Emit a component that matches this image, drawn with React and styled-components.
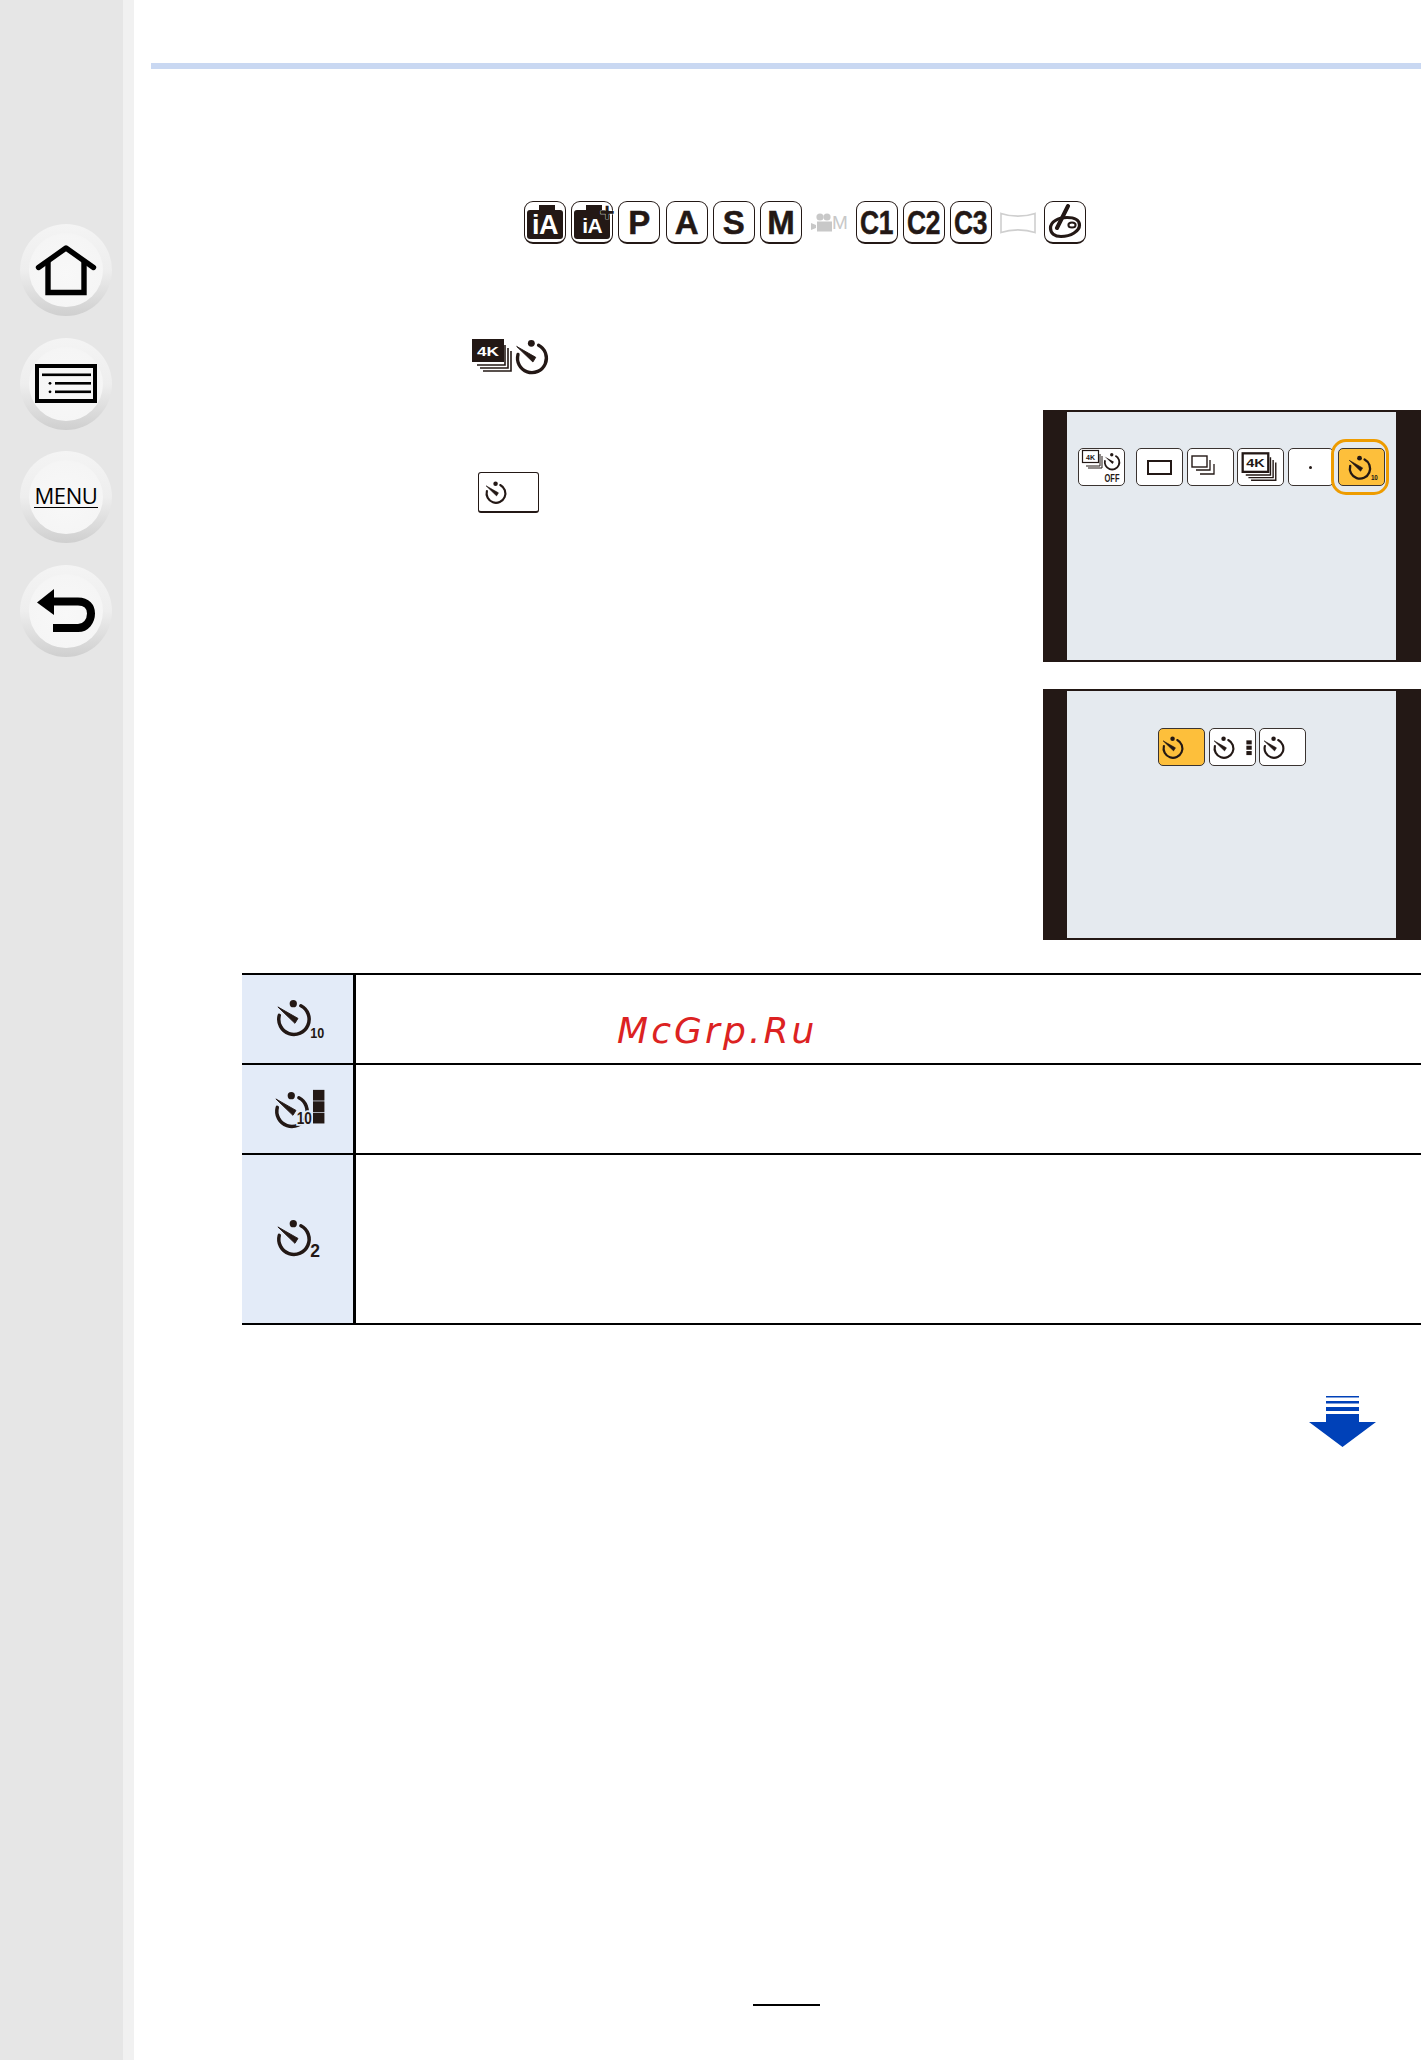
import React from "react";
import styled, { createGlobalStyle } from "styled-components";

const Global = createGlobalStyle`
  html, body { margin: 0; padding: 0; background: #fff; }
  body { font-family: "Liberation Sans", Arial, sans-serif; color: #000; }
`;

const Page = styled.div`
  display: flex;
  width: 1421px;
  min-height: 2060px;
  overflow: hidden;
`;

const Sidebar = styled.nav`
  box-sizing: border-box;
  flex: 0 0 134px;
  padding: 224px 0 0 20px;
  background: #e6e6e6;
  border-right: 11px solid #f1f1f1;
  display: flex;
  flex-direction: column;
  gap: 21.5px;
`;

const NavButton = styled.div`
  width: 92px;
  height: 92px;
  border-radius: 50%;
  background: linear-gradient(180deg, #f4f4f4 0%, #eeeeee 50%, #cfcfcf 100%);
  display: flex;
  align-items: center;
  justify-content: center;
`;

const NavFace = styled.div`
  width: 74px;
  height: 74px;
  border-radius: 50%;
  background: radial-gradient(circle at 50% 55%, #f8f8f8 0%, #f5f5f5 70%, #efefef 100%);
  display: flex;
  align-items: center;
  justify-content: center;
  flex: none;
`;

const NavIcon = styled.svg`
  flex: none;
  overflow: visible;
`;

const MenuLabel = styled.span`
  font-family: "Open Sans", sans-serif;
  font-size: 22px;
  line-height: 22px;
  color: #000;
  border-bottom: 1.5px solid #000;
  letter-spacing: -0.4px;
  padding-bottom: 1px;
  margin-top: -3px;
`;

const Main = styled.main`
  flex: 1;
  min-width: 0;
  padding: 63px 0 0 17px;
  display: flex;
  flex-direction: column;
`;

const TopRule = styled.div`
  height: 6px;
  background: #c9d8f2;
`;

const ModeRow = styled.div`
  display: flex;
  align-items: center;
  height: 43px;
  margin: 132px 0 0 373px;
`;

const ModeKey = styled.div`
  box-sizing: border-box;
  flex: none;
  width: 42px;
  height: 43px;
  margin-right: ${(p) => p.$gap ?? 5.2}px;
  border: 1.4px solid #231815;
  border-bottom-width: 2px;
  border-radius: 9px;
  background: #fff;
  display: flex;
  align-items: center;
  justify-content: center;
  font-weight: 700;
  font-size: 33px;
  color: #231815;
  line-height: 1;
  -webkit-text-stroke: 0.5px #231815;
`;

const Squeezed = styled.span`
  display: inline-block;
  transform: scaleX(0.8);
  white-space: nowrap;
  letter-spacing: -0.5px;
`;

const CameraText = styled.div`
  position: relative;
  width: 36px;
  height: 29px;
  margin-top: 5px;
  background: #231815;
  border-radius: 3px;
  color: #fff;
  font-size: ${(p) => p.$size}px;
  font-weight: 700;
  line-height: 31px;
  text-align: center;
  letter-spacing: -0.5px;
  -webkit-text-stroke: 0;
  &::before {
    content: "";
    position: absolute;
    top: -5px;
    left: 12px;
    width: 16px;
    height: 6px;
    background: #231815;
  }
`;

const PlusMark = styled.span`
  position: absolute;
  top: -10px;
  right: -4px;
  font-size: 26px;
  line-height: 24px;
  color: #231815;
  font-weight: 700;
  -webkit-text-stroke: 0.6px #fff;
  paint-order: stroke fill;
`;

const MovieMode = styled.div`
  flex: none;
  width: 44px;
  display: flex;
  align-items: center;
  color: #c8c8c8;
  font-size: 19px;
  line-height: 1;
  margin-left: -1px;
  margin-right: 1px;
`;

const ModeSvg = styled.svg`
  flex: none;
`;

const PanoramaSvg = styled.svg`
  flex: none;
  margin: 0 8px 0 8px;
`;

const Body = styled.div`
  display: flex;
  justify-content: space-between;
  align-items: flex-start;
  margin-top: 95px;
`;

const Steps = styled.div`
  padding-left: 321px;
  display: flex;
  flex-direction: column;
  align-items: flex-start;
`;

const DriveIcons = styled.div`
  display: flex;
  align-items: center;
  gap: 0;
  margin-top: -3px;
`;

const InlineKey = styled.div`
  box-sizing: border-box;
  width: 61px;
  height: 41px;
  margin: 96px 0 0 6px;
  border: 1.2px solid #231815;
  border-bottom-width: 2px;
  border-radius: 3px;
  padding-left: 4px;
  display: flex;
  align-items: center;
`;

const Screens = styled.div`
  flex: none;
  width: 378px;
  margin-top: 71px;
  display: flex;
  flex-direction: column;
  gap: 27px;
`;

const Screen = styled.div`
  box-sizing: border-box;
  height: ${(p) => p.$h}px;
  background: #e5eaef;
  border-style: solid;
  border-color: #231815;
  border-width: 2px 25px 2px 24px;
  padding: ${(p) => p.$top}px 0 0 ${(p) => p.$left}px;
  display: flex;
  align-items: flex-start;
`;

const Tile = styled.div`
  box-sizing: border-box;
  position: relative;
  flex: none;
  width: ${(p) => p.$w ?? 47}px;
  height: 38px;
  margin-right: ${(p) => p.$gap ?? 3.5}px;
  border: 1.2px solid #3a3330;
  border-bottom-width: 1.6px;
  border-radius: 5px;
  background: ${(p) => (p.$on ? "#fdbf3b" : "#fff")};
  display: flex;
  align-items: center;
  justify-content: ${(p) => p.$justify ?? "flex-start"};
  padding-left: ${(p) => p.$pad ?? 3}px;
  &::after {
    content: ${(p) => (p.$ring ? '""' : "none")};
    position: absolute;
    inset: -10px -5px -10px -8px;
    border: 3px solid #ee9c00;
    border-radius: 15px;
  }
`;

const Dot = styled.span`
  width: 3px;
  height: 3px;
  border-radius: 50%;
  background: #231815;
`;

const Frame = styled.div`
  width: 21px;
  height: 11px;
  border: 2px solid #231815;
`;

const Table = styled.div`
  margin: 33px 0 0 91px;
  border-top: 2px solid #000;
  display: grid;
  grid-template-columns: 114px 1fr;
  grid-template-rows: 90px 90px 170px;
`;

const IconCell = styled.div`
  background: #e3ebf8;
  border-right: 3px solid #000;
  border-bottom: 2px solid #000;
  box-sizing: border-box;
  display: flex;
  align-items: center;
  justify-content: center;
  padding-left: ${(p) => p.$pad ?? 0}px;
  padding-bottom: ${(p) => p.$lift ?? 0}px;
`;

const TextCell = styled.div`
  border-bottom: 2px solid #000;
  padding: 33px 0 0 261px;
`;

const Watermark = styled.span`
  font-family: "DejaVu Sans", sans-serif;
  font-style: italic;
  font-size: 36px;
  line-height: 46px;
  letter-spacing: 3.1px;
  color: #dc2222;
  display: block;
  margin-top: 0;
`;

const ArrowRow = styled.div`
  display: flex;
  justify-content: flex-end;
  padding: 71px 45px 0 0;
`;

const FootRule = styled.div`
  width: 67px;
  height: 2px;
  background: #000;
  margin: 556px 0 0 602px;
`;

const Ink = "#231815";

const Timer = ({
  size = 36, color = Ink, width = 36, label, labelSize = 10, labelX = 33, labelY = 35, labelW, halo, blocks, blockSize = 6, blockGap = 0.6,
}) => (
  <svg width={(size * width) / 36} height={size} viewBox={`0 0 ${width} 36`} style={{ flex: "none", overflow: "visible" }}>
    <path d="M23.9 8.4A13 13 0 1 1 5.4 16.6" fill="none" stroke={color} strokeWidth="3" strokeLinecap="round" />
    <circle cx="17.4" cy="6.6" r="3.1" fill={color} />
    <path d="M4.2 9.4L21.4 19.2L18.8 23.4Z" fill={color} stroke={color} strokeWidth="0.8" strokeLinejoin="round" />
    {label && (
      <text
        x={labelX}
        y={labelY}
        fontFamily="Liberation Sans, sans-serif"
        fontWeight="700"
        fontSize={labelSize}
        fill={color}
        textLength={labelW}
        lengthAdjust={labelW ? "spacingAndGlyphs" : undefined}
        stroke={halo}
        strokeWidth={halo ? 3 : undefined}
        paintOrder={halo ? "stroke" : undefined}
      >
        {label}
      </text>
    )}
    {blocks && (
      <g fill={color}>
        <rect x={blocks} y={36 - 3 * blockSize - 5} width={blockSize} height={blockSize - blockGap} />
        <rect x={blocks} y={36 - 2 * blockSize - 5} width={blockSize} height={blockSize - blockGap} />
        <rect x={blocks} y={36 - blockSize - 5} width={blockSize} height={blockSize - blockGap} />
      </g>
    )}
  </svg>
);

const FourK = ({ w = 40, h = 34, outline }) => (
  <svg width={w} height={h} viewBox="0 0 40 34" style={{ flex: "none" }}>
    <path d="M33 7V27H5" fill="none" stroke={Ink} strokeWidth="1.6" transform="translate(0 -1)" />
    <path d="M36 10V30H8" fill="none" stroke={Ink} strokeWidth="1.6" transform="translate(0 -1)" />
    <path d="M39 13V33H11" fill="none" stroke={Ink} strokeWidth="1.6" transform="translate(0 -1)" />
    {outline ? (
      <>
        <rect x="1.5" y="1.5" width="29" height="21" fill="#fff" stroke={Ink} strokeWidth="2.6" />
        <text x="16" y="17.5" textAnchor="middle" fontFamily="Liberation Sans, sans-serif" fontWeight="700" fontSize="13" fill={Ink} textLength="21" lengthAdjust="spacingAndGlyphs">4K</text>
      </>
    ) : (
      <>
        <rect x="0" y="0" width="32" height="23" fill={Ink} />
        <text x="16" y="16.5" textAnchor="middle" fontFamily="Liberation Sans, sans-serif" fontWeight="700" fontSize="13" fill="#fff" textLength="22" lengthAdjust="spacingAndGlyphs">4K</text>
      </>
    )}
  </svg>
);

const Burst = () => (
  <svg width="24" height="24" viewBox="0 0 24 24" style={{ flex: "none" }}>
    <rect x="1" y="1" width="15" height="11" fill="#fff" stroke={Ink} strokeWidth="1.4" />
    <path d="M19 5V15H5" fill="none" stroke={Ink} strokeWidth="1.3" />
    <path d="M23 9V19H9" fill="none" stroke={Ink} strokeWidth="1.3" />
  </svg>
);

const Home = () => (
  <NavIcon width="60" height="50" viewBox="0 0 60 50">
    <path d="M2.5 22.5L30 3L57.5 22.5" fill="none" stroke="#000" strokeWidth="5.4" strokeLinecap="round" strokeLinejoin="round" />
    <path d="M12 17V47.5H48V17" fill="none" stroke="#000" strokeWidth="5.4" />
  </NavIcon>
);

const List = () => (
  <NavIcon width="62" height="39" viewBox="0 0 62 39">
    <rect x="2" y="2" width="58" height="35" fill="none" stroke="#000" strokeWidth="4" />
    <rect x="7" y="9.5" width="49" height="2.6" />
    <rect x="20" y="18" width="36" height="2.6" />
    <rect x="20" y="26.5" width="36" height="2.6" />
    <circle cx="15" cy="19.3" r="1.4" />
    <circle cx="15" cy="27.8" r="1.4" />
  </NavIcon>
);

const Back = () => (
  <NavIcon width="58" height="44" viewBox="0 0 58 44">
    <path d="M0 13.5L17 0V26Z" />
    <path d="M15 12.5H41C50 12.5 54 18 54 24.5C54 32 49 39 41 39H16" fill="none" stroke="#000" strokeWidth="8" />
  </NavIcon>
);

const Movie = () => (
  <ModeSvg width="21" height="19" viewBox="0 0 21 19">
    <circle cx="9" cy="4" r="3.6" fill="#c8c8c8" />
    <circle cx="16" cy="4" r="3.6" fill="#c8c8c8" />
    <rect x="6" y="8.5" width="15" height="10" fill="#c8c8c8" />
    <path d="M0 10L5 12V15L0 17Z" fill="#c8c8c8" />
  </ModeSvg>
);

const Panorama = () => (
  <PanoramaSvg width="36" height="22" viewBox="0 0 36 22">
    <path d="M1 1.5C11 5 25 5 35 1.5V20.5C25 17 11 17 1 20.5Z" fill="#fff" stroke="#cfcfcf" strokeWidth="1.6" />
  </PanoramaSvg>
);

const Palette = () => (
  <ModeSvg width="34" height="36" viewBox="0 0 34 36">
    <path d="M2.5 24C2.5 18 10 13.5 19 13.5C27 13.5 31.5 16.5 31.5 21C31.5 27 23 32.5 13 32.5C6.5 32.5 2.5 29.5 2.5 24Z" fill="none" stroke={Ink} strokeWidth="3.2" />
    <ellipse cx="24" cy="21" rx="3.6" ry="2.6" fill="none" stroke={Ink} strokeWidth="2" />
    <path d="M20 2L9 24" stroke={Ink} strokeWidth="4" strokeLinecap="round" />
  </ModeSvg>
);

const DownArrow = () => (
  <svg width="67" height="52" viewBox="0 0 67 52">
    <g fill="#0041b8">
      <rect x="17" y="0" width="33" height="1.5" />
      <rect x="17" y="5" width="33" height="2.5" />
      <rect x="17" y="11" width="33" height="4" />
      <path d="M17 18H50V26H67L33.5 51L0 26H17Z" />
    </g>
  </svg>
);

const OffTimer = () => (
  <svg width="40" height="34" viewBox="0 0 40 34" style={{ flex: "none", overflow: "visible" }}>
    <path d="M18 4V16H4" fill="none" stroke={Ink} strokeWidth="1" />
    <path d="M20 6V18H6" fill="none" stroke={Ink} strokeWidth="1" />
    <rect x="0.5" y="0.5" width="16" height="12" fill="#fff" stroke={Ink} strokeWidth="1.2" />
    <text x="8.5" y="9.5" textAnchor="middle" fontFamily="Liberation Sans, sans-serif" fontWeight="700" fontSize="7" fill={Ink}>4K</text>
    <g transform="translate(20 1) scale(0.56)">
      <path d="M23.9 8.4A13 13 0 1 1 5.4 16.6" fill="none" stroke={Ink} strokeWidth="3.2" />
      <circle cx="17.4" cy="6.6" r="3" fill={Ink} />
      <path d="M4.6 9.8L21.2 19.4L18.8 23.2Z" fill={Ink} />
    </g>
    <text x="30" y="32" textAnchor="middle" fontFamily="Liberation Sans, sans-serif" fontWeight="700" fontSize="10.5" fill={Ink} textLength="15" lengthAdjust="spacingAndGlyphs">OFF</text>
  </svg>
);

const modes = ["P", "A", "S", "M"];

export default function App() {
  return (
    <Page>
      <Global />
      <Sidebar>
        <NavButton><NavFace><Home /></NavFace></NavButton>
        <NavButton><NavFace><List /></NavFace></NavButton>
        <NavButton><NavFace><MenuLabel>MENU</MenuLabel></NavFace></NavButton>
        <NavButton><NavFace><Back /></NavFace></NavButton>
      </Sidebar>
      <Main>
        <TopRule />
        <ModeRow>
          <ModeKey><CameraText $size={27}>iA</CameraText></ModeKey>
          <ModeKey><CameraText $size={21}>iA<PlusMark>+</PlusMark></CameraText></ModeKey>
          {modes.map((m, i) => (
            <ModeKey key={m} $gap={i === 3 ? 10 : 5.2}>{m}</ModeKey>
          ))}
          <MovieMode><Movie />M</MovieMode>
          <ModeKey $gap={5}><Squeezed>C1</Squeezed></ModeKey>
          <ModeKey $gap={5}><Squeezed>C2</Squeezed></ModeKey>
          <ModeKey $gap={0}><Squeezed>C3</Squeezed></ModeKey>
          <Panorama />
          <ModeKey $gap={0}><Palette /></ModeKey>
        </ModeRow>
        <Body>
          <Steps>
            <DriveIcons>
              <FourK w={40} h={34} />
              <Timer size={40} />
            </DriveIcons>
            <InlineKey><Timer size={26} /></InlineKey>
          </Steps>
          <Screens>
            <Screen $h={252} $top={36} $left={11}>
              <Tile $gap={11} $pad={3}><OffTimer /></Tile>
              <Tile $justify="center" $pad={0}><Frame /></Tile>
              <Tile $pad={3}><Burst /></Tile>
              <Tile $pad={3}><FourK w={36} h={30} outline /></Tile>
              <Tile $gap={4.5} $w={46} $justify="center" $pad={0}><Dot /></Tile>
              <Tile $on $ring $w={47} $pad={7}>
                <Timer size={28} width={46} label="10" labelSize={10} labelX={32} labelY={35} labelW={9} />
              </Tile>
            </Screen>
            <Screen $h={251} $top={37} $left={91}>
              <Tile $on $pad={1}><Timer size={26} /></Tile>
              <Tile $pad={1}><Timer size={26} width={58} blocks={49} blockSize={7.4} blockGap={1.8} /></Tile>
              <Tile $gap={0} $pad={1}><Timer size={26} /></Tile>
            </Screen>
          </Screens>
        </Body>
        <Table>
          <IconCell $pad={5} $lift={4}><Timer size={42} width={46} label="10" labelSize={13} labelX={32} labelY={36} labelW={12} /></IconCell>
          <TextCell><Watermark>McGrp.Ru</Watermark></TextCell>
          <IconCell $pad={1}>
            <Timer size={42} width={46} label="10" labelSize={14} labelX={22} labelY={31} labelW={13} halo="#e3ebf8" blocks={36} blockSize={9.8} />
          </IconCell>
          <TextCell />
          <IconCell $pad={4} $lift={4}><Timer size={42} width={46} label="2" labelSize={15} labelX={32} labelY={35} /></IconCell>
          <TextCell />
        </Table>
        <ArrowRow><DownArrow /></ArrowRow>
        <FootRule />
      </Main>
    </Page>
  );
}
